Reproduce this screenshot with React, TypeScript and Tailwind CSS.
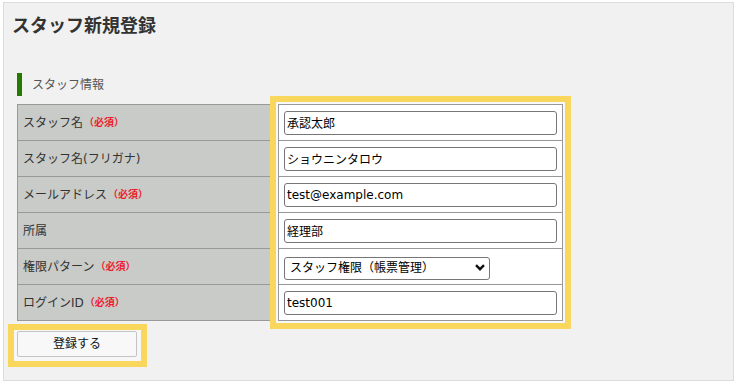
import type { FC } from 'react';

const font = { fontFamily: '"DejaVu Sans", "Noto Sans CJK JP", sans-serif' };

interface Field {
    label: string;
    required?: boolean;
    value: string;
    kind?: 'text' | 'select';
}

const fields: Field[] = [
    { label: 'スタッフ名', required: true, value: '承認太郎' },
    { label: 'スタッフ名(フリガナ)', value: 'ショウニンタロウ' },
    { label: 'メールアドレス', required: true, value: 'test@example.com' },
    { label: '所属', value: '経理部' },
    { label: '権限パターン', required: true, value: 'スタッフ権限（帳票管理）', kind: 'select' },
    { label: 'ログインID', required: true, value: 'test001' },
];

const Required: FC = () => (
    <span className="text-[10px] font-bold text-[#ee1b2e] ml-[1px]">（必須）</span>
);

const ValueCell: FC<{ field: Field }> = ({ field }) => {
    if (field.kind === 'select') {
        return (
            <div className="relative w-[206px] h-[23px]">
                <select
                    defaultValue={field.value}
                    className="appearance-none w-full h-full bg-white border border-[#767676] rounded-[3px] pl-[5px] text-[12px] text-black outline-none"
                    style={font}
                >
                    <option>{field.value}</option>
                </select>
                <svg
                    className="absolute right-[5px] top-[9px] pointer-events-none"
                    width="10"
                    height="7"
                    viewBox="0 0 10 7"
                >
                    <polyline points="1,1.2 5,5.2 9,1.2" fill="none" stroke="#111" strokeWidth="2.4" />
                </svg>
            </div>
        );
    }
    return (
        <input
            type="text"
            defaultValue={field.value}
            className="w-full h-[24px] bg-white border border-[#767676] rounded-[3px] px-[2px] text-[12px] text-black outline-none"
            style={font}
        />
    );
};

const App: FC = () => {
    return (
        <div className="bg-white w-[738px] h-[386px] pl-[3px] pt-[2px]" style={font}>
            <div className="w-[731px] h-[379px] border border-[#dcdcdc] bg-[#f0f1f0] pl-[8px] pt-[9px]">
                <h1 className="text-[18px] leading-[27px] font-bold text-[#333]">スタッフ新規登録</h1>

                <div className="flex items-center mt-[34px] ml-[5px]">
                    <div className="w-[5px] h-[23px] bg-[#267a00]" />
                    <p className="pl-[10px] text-[12px] text-[#555]">スタッフ情報</p>
                </div>

                <div className="flex mt-[8px] ml-[5px]">
                    <div className="w-[261px] border-l border-t border-[#999]">
                        {fields.map((f) => (
                            <div
                                key={f.label}
                                className="h-[36px] border-b border-[#999] bg-[#c8cbc7] pl-[5px] flex items-center text-[12px] text-[#333]"
                            >
                                {f.label}
                                {f.required && <Required />}
                            </div>
                        ))}
                    </div>
                    <div className="w-[285px] border-l border-r border-t border-[#999] bg-white shadow-[0_0_0_2px_#f8f8f8,0_0_0_8px_#f9d65c]">
                        {fields.map((f) => (
                            <div key={f.label} className="h-[36px] border-b border-[#999] px-[5px] flex items-center">
                                <ValueCell field={f} />
                            </div>
                        ))}
                    </div>
                </div>

                <div className="inline-block mt-[3px] -ml-[4px] border-[6px] border-[#f9d65c] bg-[#f6f7f6] pl-[3px] pt-[1px] pr-[4px] pb-[4px]">
                    <button
                        type="button"
                        className="block w-[120px] h-[26px] border border-[#c4c4c4] bg-[#f7f8f7] rounded-[2px] text-[12px] text-[#111]"
                        style={font}
                    >
                        登録する
                    </button>
                </div>
            </div>
        </div>
    );
};

export default App;
